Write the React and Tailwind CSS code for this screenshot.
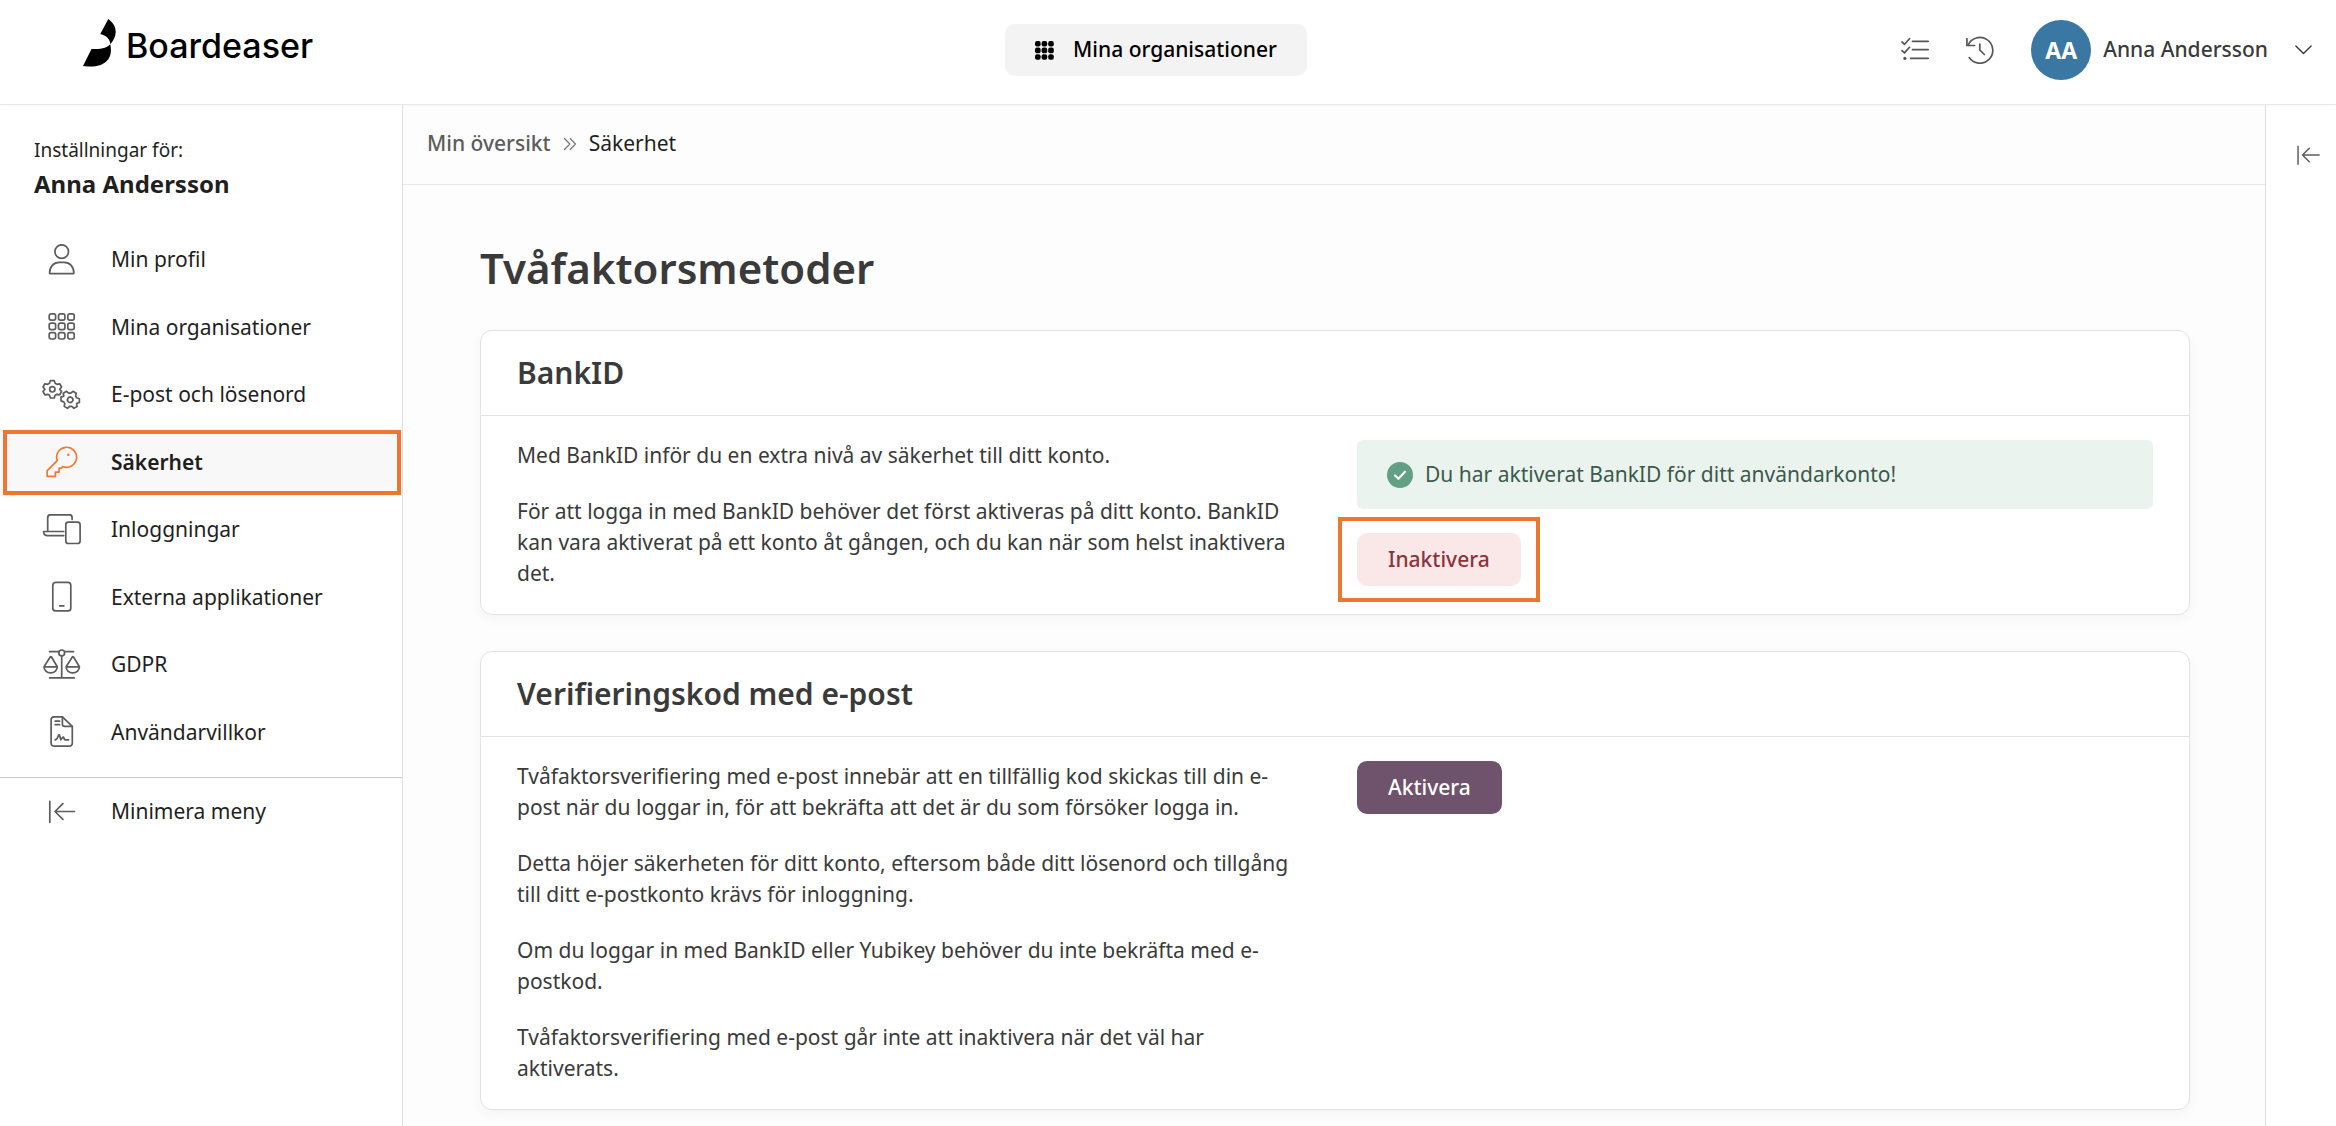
import { useState } from 'react';
import clsx from 'clsx';

function Icon({ className = 'h-8 w-10', viewBox = '0 0 40 32', children }) {
  return (
    <svg
      className={clsx('shrink-0', className)}
      viewBox={viewBox}
      fill="none"
      stroke="currentColor"
      strokeWidth="1.7"
      strokeLinecap="round"
      strokeLinejoin="round"
      aria-hidden="true"
    >
      {children}
    </svg>
  );
}

function UserIcon() {
  return (
    <Icon>
      <circle cx="20.7" cy="7.6" r="6.8" />
      <path d="M8.6 29.3c0-6.6 4-10.9 9.6-10.9h5c5.6 0 9.7 4.3 9.7 10.9 0 .2-.1.3-.3.3H8.9c-.2 0-.3-.1-.3-.3Z" />
    </Icon>
  );
}

function GridIcon() {
  return (
    <Icon>
      {[2.8, 12.2, 21.6].map(y =>
        [8.2, 17.5, 26.8].map(x => (
          <rect key={`${x}-${y}`} x={x} y={y} width="6.4" height="6.4" rx="1.9" />
        ))
      )}
    </Icon>
  );
}

// One six-toothed gear, pointing up, centred on 0,0
const GEAR = 'M-1.9-8.7h3.8l.9 2.7 1.8 1 2.8-.5 1.9 3.2L7.4 0l1.9 2.3-1.9 3.2-2.8-.5-1.8 1-.9 2.7h-3.8l-.9-2.7-1.8-1-2.8.5-1.9-3.2L-7.4 0l-1.9-2.3 1.9-3.2 2.8.5 1.8-1Z';

function GearsIcon() {
  return (
    <Icon>
      <g transform="translate(11.3 10.3)">
        <path d={GEAR} />
        <circle r="2.7" />
      </g>
      <g transform="translate(29.2 20.8) rotate(30)">
        <path d={GEAR} />
        <circle r="2.7" />
      </g>
    </Icon>
  );
}

function KeyIcon() {
  return (
    <Icon>
      <path d="M16.2 14.6A10 10 0 1 1 21.8 20.5l-1.2 1.6h-2.5v4h-3.7v4.3H6.2v-5.8Z" />
      <circle cx="27.3" cy="8.8" r="1.3" fill="currentColor" stroke="none" />
    </Icon>
  );
}

function DevicesIcon() {
  return (
    <Icon>
      <path d="M6.7 17.3V3.6c0-1.600 1.200-2.800 2.800-2.800h18.800c1.600 0 2.800 1.200 2.800 2.800v1.900" />
      <path d="M22.700 17.500H2.600c0 2.400 1.500 4.100 3.900 4.100h16.200" />
      <rect x="24.8" y="8.2" width="14.3" height="21.3" rx="2.6" />
    </Icon>
  );
}

function PhoneIcon() {
  return (
    <Icon>
      <rect x="11.8" y="1.3" width="18" height="28.6" rx="3" />
      <path d="M18.7 24.8h4.2" />
    </Icon>
  );
}

function ScalesIcon() {
  return (
    <Icon>
      <path d="M8.6 2.7h9M23.8 2.7h8.7M20.7 6.8v22M8.6 28.9h24.6" />
      <circle cx="20.7" cy="3.9" r="2.9" />
      <path d="M9.4 7.8 3 17.8c0 3.3 2.6 6 6.6 6s6.7-2.7 6.7-6l-6-10c-.2-.4-.7-.4-.9 0ZM3 17.9h13.3" />
      <path d="m31.500 7.800-6.400 10c0 3.300 2.600 6 6.600 6s6.700-2.700 6.700-6l-6-10c-.2-.4-.7-.4-.9 0ZM25.100 17.900h13.300" />
    </Icon>
  );
}

function FileIcon() {
  return (
    <Icon>
      <path d="M21.4.9h-8.300a3 3 0 0 0-3 3v23.300a3 3 0 0 0 3 3h15.200a3 3 0 0 0 3-3V10.400Z" />
      <path d="M21.4.9v7.300c0 1.200 1 2.200 2.200 2.200h7.700" />
      <path d="M14.2 5.200h4.400M14.200 8.700h4.400M14.200 23.900c1.700-.3 2.500-1.800 3.200-4.500.3-.9 1-.9 1.200 0l1.200 4.300 1.800-2.300c.4-.5.9-.3 1.100.2l.5 1.200c.3.700.9 1 1.600 1h2.800" />
    </Icon>
  );
}

function CollapseIcon(props) {
  return (
    <Icon {...props}>
      <path d="M8.8 5.3v21M33.4 15.5H14M21.9 7.6 14 15.500l7.900 7.900" />
    </Icon>
  );
}

const NAV_ITEMS = [
  { label: 'Min profil',            icon: UserIcon },
  { label: 'Mina organisationer',   icon: GridIcon },
  { label: 'E-post och lösenord',   icon: GearsIcon },
  { label: 'Säkerhet',              icon: KeyIcon },
  { label: 'Inloggningar',          icon: DevicesIcon },
  { label: 'Externa applikationer', icon: PhoneIcon },
  { label: 'GDPR',                  icon: ScalesIcon },
  { label: 'Användarvillkor',       icon: FileIcon },
];

function Header() {
  return (
    <header className="relative z-10 grid h-[105px] shrink-0 grid-cols-[1fr_auto_1fr] items-center border-b border-[#e8e8e8] bg-white pr-6 pb-1 shadow-[0_1px_2px_rgba(0,0,0,0.03)]">
      <a href="#" className="ml-[83px] flex items-start gap-2.5 self-start pt-[19px] text-black">
        <svg className="h-12 w-[33px]" viewBox="0 0 33 48" fill="currentColor" aria-hidden="true">
          <path d="M25.300 0C31 4.300 33.200 9 32.600 14.300c-.4 4.200-2.300 7.700-5.400 11 .3-4.600-3.600-8.700-9.900-10.300Z" />
          <path d="M27.200 25.300c-2.900 3.400-8.300 5.300-18.700 4.700L0 46.900c10 1.700 18.500.4 23.500-4.600 4.400-4.400 5.300-10.300 3.700-17Z" />
        </svg>
        <span className="mt-1 font-['Inter',sans-serif] text-[34px] leading-[46px] font-medium">Boardeaser</span>
      </a>

      <button className="flex h-[52px] items-center gap-[19px] rounded-[10px] bg-[#f3f3f3] px-[30px] font-medium text-black">
        <svg className="size-[19px]" viewBox="0 0 19 19" fill="currentColor" aria-hidden="true">
          {[0, 6.6, 13.2].map(y =>
            [0, 6.6, 13.2].map(x => (
              <rect key={`${x}-${y}`} x={x} y={y} width="5.6" height="5.6" rx="2" />
            ))
          )}
        </svg>
        Mina organisationer
      </button>

      <div className="flex items-center justify-end text-[#555]">
        <button aria-label="Uppgifter" className="mr-[37px]">
          <Icon className="size-7" viewBox="0 0 28 28">
            <path d="M11.5 5.3h15.7M11.5 13.7h15.7M9.7 22.4h17.5" />
            <path d="m1 6 2.500 2.300 5-5.600M1 14.600l2.500 2.300 5-5.600" />
            <circle cx="3.9" cy="22.4" r="1.6" fill="currentColor" stroke="none" />
          </Icon>
        </button>
        <button aria-label="Historik" className="mr-[37px]">
          <Icon className="size-7" viewBox="0 0 28 28">
            <path d="M3.2 21.6A12.9 12.9 0 1 0 2 9.3" />
            <path d="M.9 2.6v6.900h7.700M13.800 8v6l4.600 4.500" />
          </Icon>
        </button>
        <button className="flex items-center font-medium text-[#3a3a3a]">
          <span className="mr-3 flex size-15 items-center justify-center rounded-full bg-[#3a77a3] text-[23px] font-bold text-white">
            AA
          </span>
          Anna Andersson
          <Icon className="ml-[27px] h-2.5 w-[17px]" viewBox="0 0 17 10">
            <path d="m.9.9 7.6 7.7L16.1.9" strokeWidth="1.4" />
          </Icon>
        </button>
      </div>
    </header>
  );
}

function Sidebar({ active, onSelect }) {
  return (
    <aside className="w-[403px] shrink-0 border-r border-[#dedede] bg-white text-[#1f1f1f]">
      <div className="px-[34px] pt-[31px]">
        <p className="text-[19px] leading-7">Inställningar för:</p>
        <p className="text-2xl leading-10 font-bold">Anna Andersson</p>
      </div>

      <nav>
        <ul className="mt-[22px] grid h-[540px] auto-rows-fr">
          {NAV_ITEMS.map(({ label, icon: ItemIcon }) => {
            const selected = label === active;
            return (
              <li key={label} className={clsx('relative', selected && 'bg-[#f8f8f8]')}>
                <a
                  href="#"
                  onClick={() => onSelect(label)}
                  className={clsx('flex h-full items-center gap-[30px] pl-[41px]', selected && 'font-semibold')}
                >
                  <span className={selected ? 'text-[#f07830]' : 'text-[#5c5c5c]'}>
                    <ItemIcon />
                  </span>
                  {label}
                </a>
                {selected && (
                  <span className="pointer-events-none absolute inset-y-px right-px left-[3px] border-4 border-[#ee7730]" />
                )}
              </li>
            );
          })}
        </ul>
        <button className="mt-[11px] flex h-[68px] w-full items-center gap-[30px] border-t border-[#c8c8c8] pl-[41px]">
          <span className="text-[#5c5c5c]">
            <CollapseIcon />
          </span>
          Minimera meny
        </button>
      </nav>
    </aside>
  );
}

function Card({ title, paragraphs, children }) {
  return (
    <section className="rounded-xl border border-[#e3e3e3] bg-white shadow-[0_4px_12px_rgba(0,0,0,0.04)]">
      <h2 className="border-b border-[#e3e3e3] px-9 text-[30px] leading-[84px] font-semibold">{title}</h2>
      <div className="grid grid-cols-2 gap-11 px-9 pt-6 pb-[25px]">
        <div className="space-y-[25px] pr-4 leading-[31px]">
          {paragraphs.map(text => (
            <p key={text}>{text}</p>
          ))}
        </div>
        <div className="flex flex-col items-start gap-6">{children}</div>
      </div>
    </section>
  );
}

export default function App() {
  const [active, setActive] = useState('Säkerhet');

  return (
    <div className="flex min-h-screen flex-col bg-[#fdfdfd] font-['Noto_Sans',sans-serif] text-[21px] text-[#3a3a3a]">
      <Header />

      <div className="flex flex-1">
        <Sidebar active={active} onSelect={setActive} />

        <main className="min-w-0 flex-1">
          {/* Breadcrumbs */}
          <nav className="flex h-20 items-center border-b border-[#e8e8e8] pb-0.5 pl-6">
            <a href="#" className="font-medium text-[#5c5c5c]">Min översikt</a>
            <Icon className="mx-3 h-3.5 w-3.5 text-[#777]" viewBox="0 0 14 14">
              <path d="m1.5 1.5 5.300 5.500-5.300 5.500M7.200 1.500 12.500 7l-5.300 5.500" strokeWidth="1.2" />
            </Icon>
            <span className="text-[#1f1f1f]">Säkerhet</span>
          </nav>

          <div className="pt-[58px] pr-[75px] pb-4 pl-[77px]">
            <h1 className="mb-[37px] text-[42px] leading-[50px] font-semibold">Tvåfaktorsmetoder</h1>

            <div className="space-y-9">
              <Card
                title="BankID"
                paragraphs={[
                  'Med BankID inför du en extra nivå av säkerhet till ditt konto.',
                  'För att logga in med BankID behöver det först aktiveras på ditt konto. BankID kan vara aktiverat på ett konto åt gången, och du kan när som helst inaktivera det.',
                ]}
              >
                <div className="flex h-[69px] w-full items-center gap-3 rounded-md bg-[#eaf3ee] pl-[30px] text-[#3b594c]">
                  <svg className="size-[26px]" viewBox="0 0 26 26" fill="none" aria-hidden="true">
                    <circle cx="13" cy="13" r="13" fill="#639f83" />
                    <path d="m8 13.500 3.400 3.300 6.600-7" stroke="#fff" strokeWidth="2.2" strokeLinecap="round" strokeLinejoin="round" />
                  </svg>
                  Du har aktiverat BankID för ditt användarkonto!
                </div>
                <div className="relative">
                  <button className="h-[53px] rounded-[10px] bg-[#fae8e9] px-[31px] font-medium text-[#8f333c]">Inaktivera</button>
                  <span className="pointer-events-none absolute -inset-x-[19px] -inset-y-4 border-4 border-[#ee7730]" />
                </div>
              </Card>

              <Card
                title="Verifieringskod med e-post"
                paragraphs={[
                  'Tvåfaktorsverifiering med e-post innebär att en tillfällig kod skickas till din e-post när du loggar in, för att bekräfta att det är du som försöker logga in.',
                  'Detta höjer säkerheten för ditt konto, eftersom både ditt lösenord och tillgång till ditt e-postkonto krävs för inloggning.',
                  'Om du loggar in med BankID eller Yubikey behöver du inte bekräfta med e-postkod.',
                  'Tvåfaktorsverifiering med e-post går inte att inaktivera när det väl har aktiverats.',
                ]}
              >
                <button className="h-[53px] rounded-[10px] bg-[#6f526b] px-[31px] font-medium text-white">Aktivera</button>
              </Card>
            </div>
          </div>
        </main>

        <aside className="w-[71px] shrink-0 border-l border-[#dedede] bg-white pt-[38px] pl-[30px]">
          <button aria-label="Visa panel" className="flex text-[#5c5c5c]">
            <CollapseIcon className="h-6 w-[25px]" viewBox="7 1.5 28 28" />
          </button>
        </aside>
      </div>
    </div>
  );
}
